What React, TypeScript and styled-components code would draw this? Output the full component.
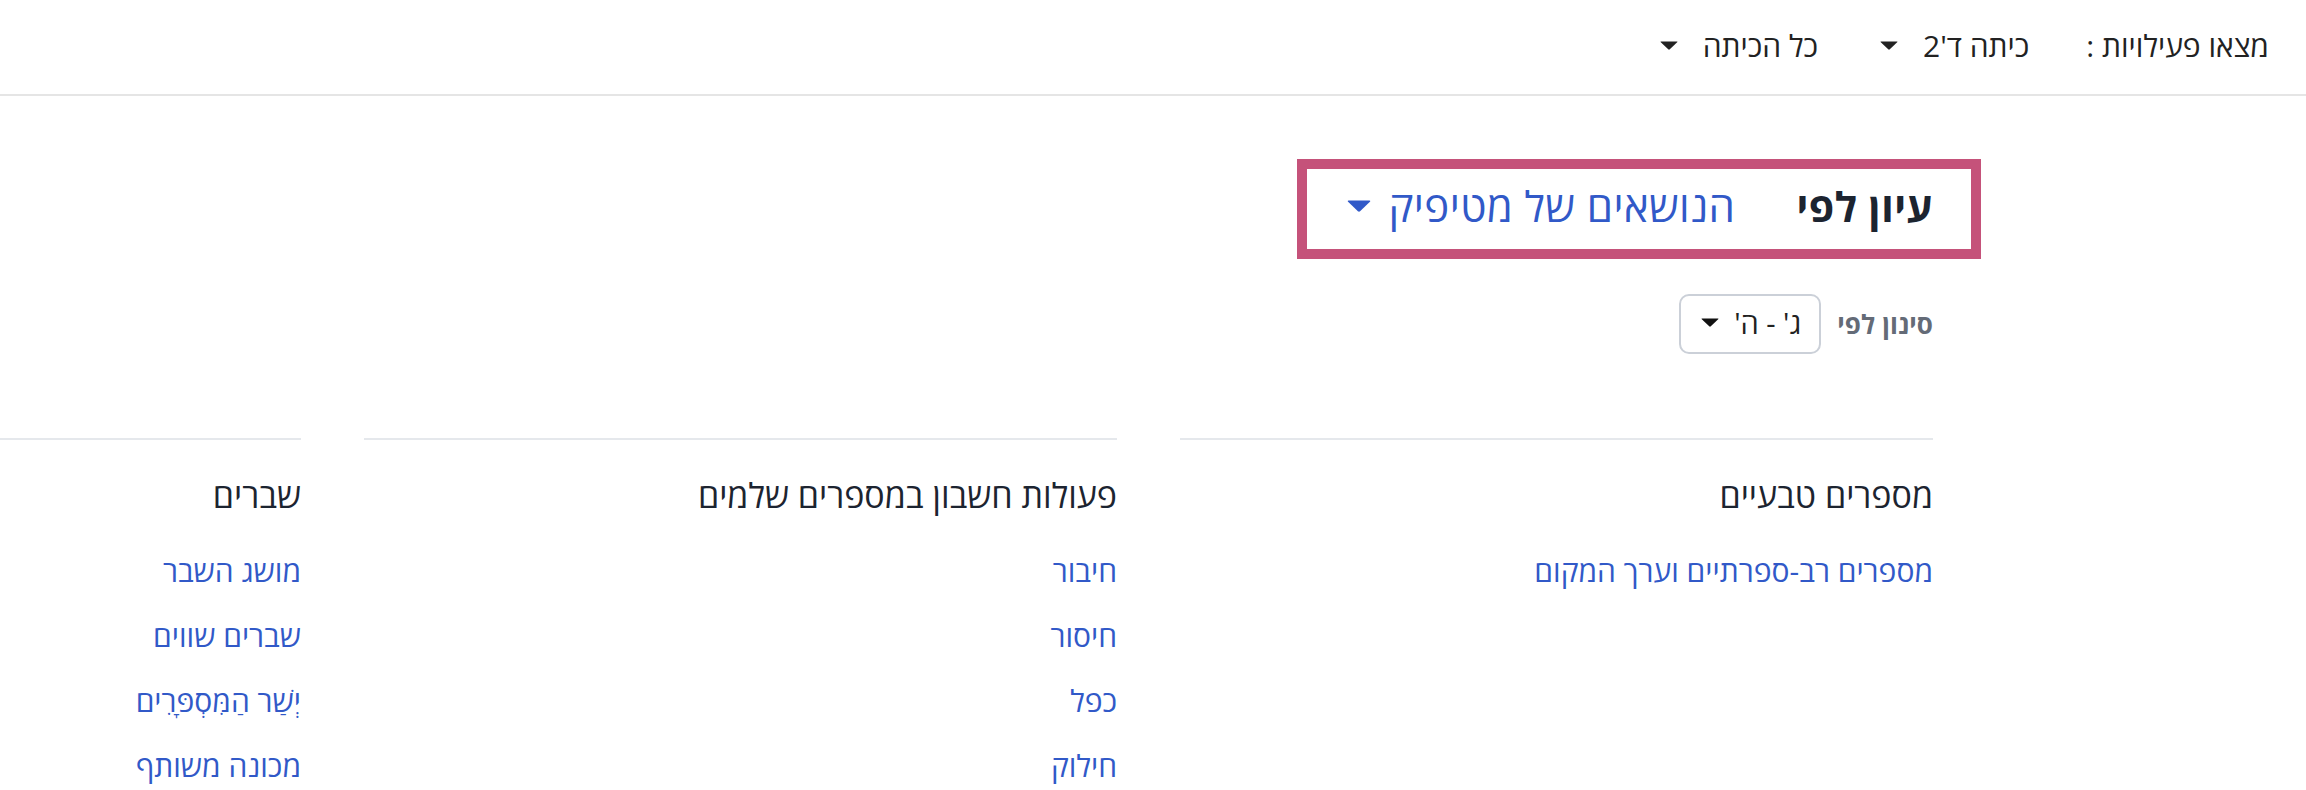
import React from "react";
import styled, { createGlobalStyle } from "styled-components";

const GlobalStyle = createGlobalStyle`
  html, body { margin: 0; padding: 0; background: #ffffff; }
  body {
    font-family: "Open Sans", "Liberation Sans", "DejaVu Sans", sans-serif;
    overflow: hidden;
  }
  * { box-sizing: border-box; }
`;

const Page = styled.div`
  width: 2306px;
  min-height: 790px;
  direction: rtl;
`;

const TopBar = styled.header`
  height: 96px;
  border-bottom: 2px solid #e5e5e5;
  display: flex;
  align-items: center;
  padding: 0 37px 4px 0;
  color: #222222;
  font-size: 30px;
`;

const BarLabel = styled.span`
  margin-left: 57px;
`;

const BarDropdown = styled.button<{ $gap?: number }>`
  all: unset;
  display: inline-flex;
  align-items: center;
  gap: 25px;
  margin-left: ${(p) => p.$gap ?? 0}px;
  font: inherit;
  color: inherit;
  cursor: pointer;
`;

const Caret = ({ w, h, color }: { w: number; h: number; color: string }) => (
  <svg width={w} height={h} viewBox="0 0 20 10" aria-hidden="true">
    <path d="M1.2 0.5 H18.8 Q20 0.5 19.1 1.4 L10.9 9.3 Q10 10.1 9.1 9.3 L0.9 1.4 Q0 0.5 1.2 0.5 Z" fill={color} />
  </svg>
);

const Main = styled.main`
  width: 1560px;
  margin: 0 auto;
  display: flex;
  flex-direction: column;
  align-items: flex-start;
  padding-top: 63px;
`;

const BrowseBox = styled.div`
  display: inline-flex;
  align-items: center;
  height: 100px;
  border: 10px solid #c5527a;
  padding: 0 38px 6px 40px;
  margin-right: -48px;
`;

const BrowseTitle = styled.h1`
  margin: 0 0 0 61px;
  font-size: 41px;
  font-weight: 700;
  letter-spacing: 0.5px;
  color: #1c2430;
  line-height: 1;
`;

const TopicPicker = styled.button`
  all: unset;
  display: inline-flex;
  align-items: center;
  gap: 17px;
  font-size: 42px;
  letter-spacing: 0.4px;
  color: #3159c8;
  cursor: pointer;
  line-height: 1;
`;

const FilterRow = styled.div`
  display: flex;
  align-items: center;
  gap: 16px;
  margin-top: 35px;
`;

const FilterLabel = styled.span`
  font-size: 26px;
  font-weight: 700;
  letter-spacing: 0.1px;
  color: #646b77;
`;

const Select = styled.button`
  all: unset;
  width: 142px;
  height: 60px;
  border: 2px solid #cbd0d8;
  border-radius: 10px;
  display: inline-flex;
  align-items: center;
  gap: 15px;
  padding: 0 18px 4px 0;
  font-size: 29px;
  color: #222222;
  box-sizing: border-box;
  cursor: pointer;
`;

const Columns = styled.div`
  display: flex;
  gap: 63px;
  margin-top: 84px;
  width: 100%;
`;

const Column = styled.section`
  flex: 0 0 753px;
  border-top: 2px solid #e5e8ec;
  padding-top: 30px;
`;

const ColumnTitle = styled.h2`
  margin: 0 0 27px;
  font-size: 34px;
  font-weight: 400;
  line-height: 51px;
  color: #1c2430;
`;

const LinkList = styled.ul`
  list-style: none;
  margin: 0;
  padding: 0;
  display: flex;
  flex-direction: column;
  gap: 20px;
`;

const TopicLink = styled.a`
  display: inline-block;
  font-size: 30px;
  line-height: 45px;
  color: #3159c8;
  text-decoration: none;
`;

const columns = [
  { title: "מספרים טבעיים", links: ["מספרים רב-ספרתיים וערך המקום"] },
  { title: "פעולות חשבון במספרים שלמים", links: ["חיבור", "חיסור", "כפל", "חילוק"] },
  { title: "שברים", links: ["מושג השבר", "שברים שווים", "יְשַׁר הַמִּסְפָּרִים", "מכונה משותף"] },
];

export default function App() {
  return (
    <Page>
      <GlobalStyle />
      <TopBar>
        <BarLabel>מצאו פעילויות :</BarLabel>
        <BarDropdown $gap={62}>
          כיתה ד'2
          <Caret w={18} h={9} color="#222222" />
        </BarDropdown>
        <BarDropdown>
          כל הכיתה
          <Caret w={18} h={9} color="#222222" />
        </BarDropdown>
      </TopBar>
      <Main>
        <BrowseBox>
          <BrowseTitle>עיון לפי</BrowseTitle>
          <TopicPicker>
            הנושאים של מטיפיק
            <Caret w={24} h={12} color="#3159c8" />
          </TopicPicker>
        </BrowseBox>
        <FilterRow>
          <FilterLabel>סינון לפי</FilterLabel>
          <Select>
            ג' - ה'
            <Caret w={18} h={9} color="#111111" />
          </Select>
        </FilterRow>
        <Columns>
          {columns.map((c) => (
            <Column key={c.title}>
              <ColumnTitle>{c.title}</ColumnTitle>
              <LinkList>
                {c.links.map((l) => (
                  <li key={l}>
                    <TopicLink href="#">{l}</TopicLink>
                  </li>
                ))}
              </LinkList>
            </Column>
          ))}
        </Columns>
      </Main>
    </Page>
  );
}
